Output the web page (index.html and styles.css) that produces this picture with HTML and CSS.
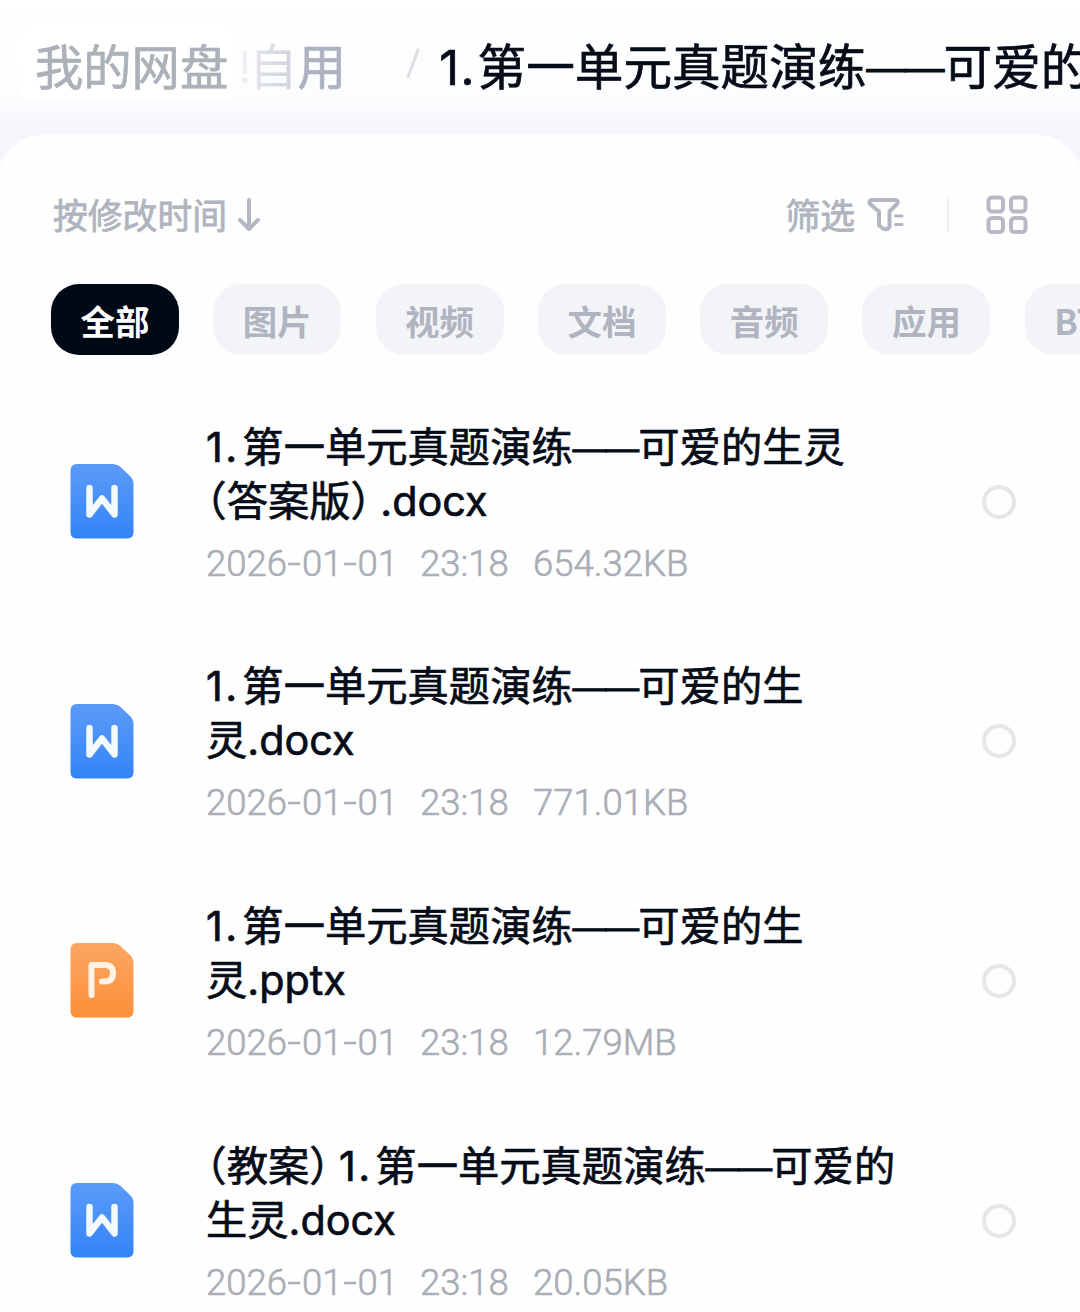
FILE: index.html
```html
<!DOCTYPE html>
<html lang="zh-CN">
<head>
  <meta charset="UTF-8">
  <meta name="viewport" content="width=device-width, initial-scale=1.0">
  <title>我的网盘</title>
  <link rel="stylesheet" href="styles.css">
</head>
<body>
  <!-- 图标 -->
  <svg class="defs" width="0" height="0">
    <defs>
      <linearGradient id="blue" x1="0" y1="0" x2="0" y2="1">
        <stop offset="0" stop-color="#5b9bf8"/>
        <stop offset="1" stop-color="#3384f8"/>
      </linearGradient>
      <linearGradient id="orange" x1="0" y1="0" x2="0" y2="1">
        <stop offset="0" stop-color="#fba663"/>
        <stop offset="1" stop-color="#fd8f38"/>
      </linearGradient>
    </defs>
    <symbol id="icon-word" viewBox="0 0 64 75">
      <path d="M7 0H43Q47 0 50 2.500L60 12Q63.500 15.500 63.500 20V68Q63.500 74.500 57 74.500H7Q.5 74.500 .5 68V7Q.5 0 7 0Z" fill="url(#blue)"/>
      <path d="M19.500 24V50.500L32 34.500L44.500 50.500V24" fill="none" stroke="#f4f9ff" stroke-width="6.500" stroke-linecap="round" stroke-linejoin="round"/>
    </symbol>
    <symbol id="icon-ppt" viewBox="0 0 64 75">
      <path d="M7 0H43Q47 0 50 2.500L60 12Q63.500 15.500 63.500 20V68Q63.500 74.500 57 74.500H7Q.5 74.500 .5 68V7Q.5 0 7 0Z" fill="url(#orange)"/>
      <path d="M21.500 52V22H34.500Q43 22 43 30.300Q43 38.500 34.500 38.500H32" fill="none" stroke="#fff3e6" stroke-width="6" stroke-linecap="round" stroke-linejoin="round"/>
    </symbol>
  </svg>

  <!-- 路径 -->
  <header class="breadcrumb">
    <span class="crumb root">我的网盘</span>
    <span class="mark">!</span>
    <span class="crumb"><span class="faded">自</span>用</span>
    <svg class="slash" width="14" height="32" viewBox="0 0 14 32"><path d="M12 2L2 29" stroke="#dcdee3" stroke-width="3" stroke-linecap="round"/></svg>
    <span class="current"><span class="num">1.</span>第一单元真题演练<span class="dash">——</span>可爱的生灵</span>
  </header>

  <main class="panel">
    <!-- 排序和筛选 -->
    <div class="toolbar">
      <div class="sort">
        <span class="label">按修改时间</span>
        <svg width="24" height="36" viewBox="0 0 24 36" fill="none" stroke="#b3b7c2" stroke-width="4" stroke-linecap="round" stroke-linejoin="round"><path d="M12 3V32M3 23L12 32L21 23"/></svg>
      </div>
      <div class="tools">
        <span class="label">筛选</span>
        <svg class="funnel" width="38" height="36" viewBox="0 0 38 36" fill="none" stroke="#b3b7c2" stroke-width="4" stroke-linecap="round" stroke-linejoin="round"><path d="M4.500 3H28.500Q32 4 30 7L22.500 14.500V30Q20 33.500 16 31.500L12 28.500V14.500L3 7Q1.500 4 4.500 3Z"/><path d="M28.500 19H35M28.500 27.500H35" stroke-width="3"/></svg>
        <span class="divider"></span>
        <svg width="42" height="40" viewBox="0 0 42 40" fill="none" stroke="#b7bac6" stroke-width="4"><rect x="2.500" y="2.500" width="14.500" height="14" rx="3.500"/><rect x="25" y="2.500" width="14.500" height="14" rx="3.500"/><rect x="2.500" y="23" width="14.500" height="14" rx="3.500"/><rect x="25" y="23" width="14.500" height="14" rx="3.500"/></svg>
      </div>
    </div>

    <!-- 分类 -->
    <nav class="chips">
      <span class="chip active">全部</span>
      <span class="chip">图片</span>
      <span class="chip">视频</span>
      <span class="chip">文档</span>
      <span class="chip">音频</span>
      <span class="chip">应用</span>
      <span class="chip">BT种子</span>
    </nav>

    <!-- 文件列表 -->
    <ul class="files">
      <li class="file">
        <svg class="file-icon"><use href="#icon-word"/></svg>
        <div class="info">
          <div class="name"><span class="num">1.</span>第一单元真题演练<span class="dash">——</span>可爱的生灵<br><span class="open">（</span>答案版<span class="close">）</span><span class="ext">.docx</span></div>
          <div class="meta"><span class="date">2026<i>-</i>01<i>-</i>01</span><span class="time">23:18</span><span class="size">654.32KB</span></div>
        </div>
        <span class="check"></span>
      </li>
      <li class="file">
        <svg class="file-icon"><use href="#icon-word"/></svg>
        <div class="info">
          <div class="name"><span class="num">1.</span>第一单元真题演练<span class="dash">——</span>可爱的生<br>灵<span class="ext">.docx</span></div>
          <div class="meta"><span class="date">2026<i>-</i>01<i>-</i>01</span><span class="time">23:18</span><span class="size">771.01KB</span></div>
        </div>
        <span class="check"></span>
      </li>
      <li class="file">
        <svg class="file-icon"><use href="#icon-ppt"/></svg>
        <div class="info">
          <div class="name"><span class="num">1.</span>第一单元真题演练<span class="dash">——</span>可爱的生<br>灵<span class="ext">.pptx</span></div>
          <div class="meta"><span class="date">2026<i>-</i>01<i>-</i>01</span><span class="time">23:18</span><span class="size">12.79MB</span></div>
        </div>
        <span class="check"></span>
      </li>
      <li class="file">
        <svg class="file-icon"><use href="#icon-word"/></svg>
        <div class="info">
          <div class="name"><span class="open">（</span>教案<span class="close">）</span><span class="num">1.</span>第一单元真题演练<span class="dash">——</span>可爱的<br>生灵<span class="ext">.docx</span></div>
          <div class="meta"><span class="date">2026<i>-</i>01<i>-</i>01</span><span class="time">23:18</span><span class="size">20.05KB</span></div>
        </div>
        <span class="check"></span>
      </li>
    </ul>
  </main>
</body>
</html>
```
FILE: styles.css
```css
* {
  margin: 0;
  padding: 0;
  box-sizing: border-box;
}

body {
  height: 1312px;
  overflow: hidden;
  background: #f5f6fb;
  font-family: "Noto Sans CJK SC", sans-serif;
  color: #060c18;
  text-spacing-trim: space-all;
}

.defs {
  position: absolute;
}

/* 路径 */
.breadcrumb {
  display: flex;
  align-items: center;
  height: 134px;
  padding: 0 0 7px 17px;
  background: linear-gradient(#fff 0, #fcfdfe 90px, #f5f6fb 134px);
  font-size: 48.600px;
  line-height: 60px;
  white-space: nowrap;
  overflow: hidden;
}

.crumb {
  flex: none;
  color: #adb2c0;
  -webkit-text-stroke: .7px currentColor;
}

.crumb.root {
  width: 221px;
  padding: 8px 0 8px 18px;
  background: #fff;
  border-radius: 20px;
  font-size: 48.300px;
  color: #acb1b9;
}

.mark {
  flex: none;
  width: 11px;
  font-size: 42px;
  color: #eceef2;
}

.faded {
  background: linear-gradient(90deg, #e4e6eb, #cdd0da);
  -webkit-background-clip: text;
  -webkit-text-stroke: 0;
  color: transparent;
}

.crumb + .slash {
  margin: 0 19px 0 60px;
}

.slash {
  flex: none;
}

.current {
  flex: none;
  -webkit-text-stroke: .7px currentColor;
}

.num {
  display: inline-block;
  width: .88em;
  font-family: Inter, sans-serif;
  line-height: 1;
  letter-spacing: .06em;
}

.current .num {
  width: .79em;
  letter-spacing: .03em;
}

/* 破折号 */
.dash {
  font-family: "Liberation Sans", sans-serif;
  font-size: .81em;
  line-height: 1;
  letter-spacing: -.02em;
  vertical-align: .09em;
  -webkit-text-stroke: 1.200px currentColor;
}

/* 主面板 */
.panel {
  height: 1178px;
  margin: 0 -4px;
  padding: 50px 4px 0;
  background: #fefefe;
  border-radius: 50px 50px 0 0;
  overflow: hidden;
}

.toolbar {
  display: flex;
  justify-content: space-between;
  align-items: center;
  height: 62px;
  padding: 0 52px 0 53px;
  font-size: 34.800px;
  line-height: 50px;
  color: #b0b4be;
  -webkit-text-stroke: .8px currentColor;
}

.sort,
.tools {
  display: flex;
  align-items: center;
}

.label {
  padding-bottom: 3px;
}

.sort svg {
  margin-left: 10px;
}

.funnel {
  margin-left: 12px;
}

.divider {
  width: 2px;
  height: 36px;
  margin: 0 37px 0 42px;
  background: #eceef1;
}

/* 分类 */
.chips {
  display: flex;
  gap: 34.300px;
  padding: 38px 0 0 51px;
}

.chip {
  flex: none;
  height: 71px;
  padding: 0 29.500px;
  border-radius: 28px;
  background: #f3f4f8;
  font-size: 34.500px;
  font-weight: bold;
  line-height: 72px;
  color: #b0b4c0;
}

.chip.active {
  background: #010916;
  color: #fff;
}

/* 文件列表 */
.files {
  list-style: none;
  padding-top: 27px;
}

.file {
  display: flex;
  align-items: center;
  height: 239.600px;
  padding: 0 64px 0 70px;
}

.file-icon {
  flex: none;
  width: 64px;
  height: 75px;
}

.info {
  flex: 1;
  padding-bottom: 1px;
  margin-left: 72px;
}

.name {
  font-size: 41.300px;
  line-height: 54px;
  white-space: nowrap;
  -webkit-text-stroke: .7px currentColor;
}

/* 半宽括号 */
.open,
.close {
  font-feature-settings: "halt";
}

.close {
  margin-right: .22em;
}

.ext {
  font-family: Inter, sans-serif;
  line-height: 1;
}

.meta {
  display: flex;
  height: 44px;
  margin-top: 17px;
  font-family: Roboto, sans-serif;
  font-size: 36.500px;
  font-weight: 300;
  line-height: 44px;
  color: #a9adb5;
  -webkit-text-stroke: .6px currentColor;
}

.meta i {
  display: inline-block;
  font-style: normal;
  transform: scaleX(1.300);
  margin: 0 2.300px;
}

.date {
  width: 214px;
}

.time {
  width: 113px;
}

.check {
  width: 34px;
  height: 34px;
  border: 4px solid #e5e6e8;
  border-radius: 50%;
}
```
